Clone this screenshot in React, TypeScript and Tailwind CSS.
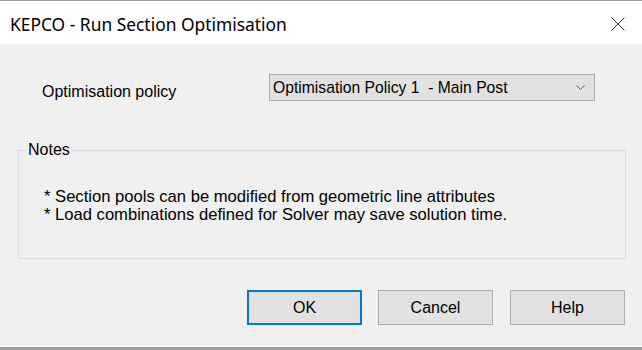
import { ChevronDown } from "lucide-react";

const body = "font-['Liberation_Sans',Arial,sans-serif]";

export default function App() {
  return (
    <div className="w-[642px] h-[350px] flex flex-col bg-[#f0f0f0] border-t border-[#a0a0a0] overflow-hidden">
      {/* Title bar */}
      <div className="h-[43px] shrink-0 bg-white flex items-center justify-between pl-[10px] pr-[17px]">
        <span className="font-['Noto_Sans',sans-serif] text-[17.4px] text-black pt-[3px]">
          KEPCO - Run Section Optimisation
        </span>
        <svg width="14" height="14" viewBox="0 0 14 14" className="text-[#333] mt-[2px]">
          <path d="M0.5 0.5 L13.5 13.5 M13.5 0.5 L0.5 13.5" stroke="currentColor" strokeWidth="1" fill="none" />
        </svg>
      </div>

      {/* Body */}
      <div className={`flex-1 flex flex-col ${body} text-[16px] text-black`}>
        {/* Policy row */}
        <div className="flex items-center mt-[30px] h-[27px]">
          <span className="ml-[42px] w-[227px] pt-[8px]">Optimisation policy</span>
          <div className="w-[326px] h-[27px] flex items-center justify-between bg-[#e1e1e1] border border-[#adadad] pl-[3px] pr-[6px]">
            <span className="whitespace-pre text-[15.7px]">Optimisation Policy 1  - Main Post</span>
            <ChevronDown className="w-[15px] h-[15px] text-[#505050]" strokeWidth={1.5} />
          </div>
        </div>

        {/* Notes group */}
        <fieldset className="mt-[40px] ml-[18px] w-[608px] h-[118px] border border-[#dcdcdc] px-[8px]">
          <legend className="px-[1px] leading-[18px]">Notes</legend>
          <div className="ml-[17px] mt-[29px] leading-[18px] text-[16.6px]">
            <p>* Section pools can be modified from geometric line attributes</p>
            <p>* Load combinations defined for Solver may save solution time.</p>
          </div>
        </fieldset>

        {/* Buttons */}
        <div className="flex justify-end pr-[17px] mt-[31px]">
          <button className="w-[115px] h-[35px] bg-[#e1e1e1] border-2 border-[#0078d7]">OK</button>
          <button className="ml-[16px] w-[115px] h-[35px] bg-[#e1e1e1] border border-[#adadad]">Cancel</button>
          <button className="ml-[17px] w-[115px] h-[35px] bg-[#e1e1e1] border border-[#adadad]">Help</button>
        </div>
      </div>

      {/* Bottom edge */}
      <div className="h-[1px] shrink-0 bg-white" />
      <div className="h-[3px] shrink-0 bg-[#a0a0a0]" />
    </div>
  );
}
